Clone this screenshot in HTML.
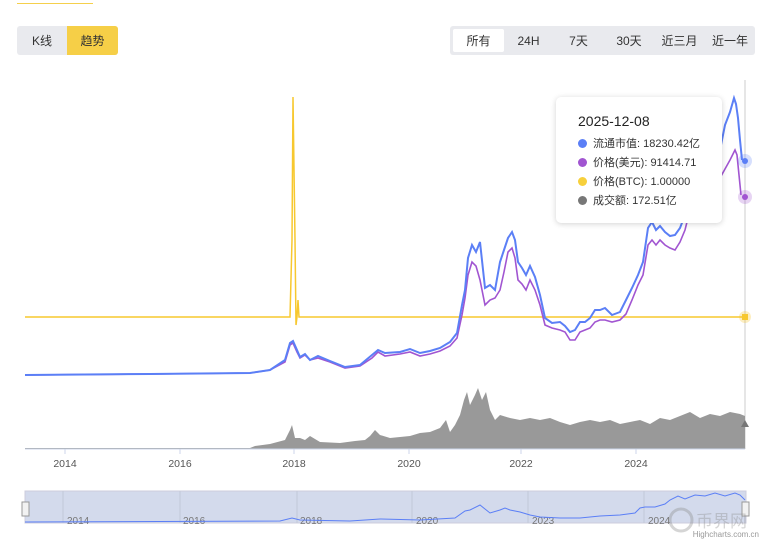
<!DOCTYPE html>
<html><head><meta charset="utf-8"><style>
body{margin:0;width:771px;height:545px;background:#fff;font-family:"Liberation Sans","Noto Sans CJK SC",sans-serif;overflow:hidden;position:relative}
.seg{position:absolute;top:26px;height:29px;background:#e9eaee;border-radius:3px;display:flex;font-size:12px;color:#333}
.seg div{display:flex;align-items:center;justify-content:center}
.tt{position:absolute;left:556px;top:97px;width:166px;height:126px;background:#fff;border-radius:5px;box-shadow:0 1px 6px rgba(0,0,0,.18);font-size:11px;color:#333}
.tt .d{position:absolute;left:22px;top:16px;font-size:14px;color:#222}
.tt .r{position:absolute;left:22px;display:flex;align-items:center}
.tt .r i{display:inline-block;width:9px;height:9px;border-radius:50%;margin-right:6px}
</style></head><body>
<div style="position:absolute;left:17px;top:3px;width:76px;height:1px;background:#f5d04c"></div>
<div class="seg" style="left:17px;width:101px"><div style="width:50px">K线</div><div style="width:51px;background:#f6cf47;border-radius:0 3px 3px 0">趋势</div></div>
<div class="seg" style="left:450px;width:305px"><div style="width:51px;background:#fff;margin:3px 0 3px 3px;border-radius:2px">所有</div><div style="width:49px">24H</div><div style="width:51px">7天</div><div style="width:50px">30天</div><div style="width:51px">近三月</div><div style="width:50px">近一年</div></div>
<svg width="771" height="545" style="position:absolute;left:0;top:0">
<line x1="745" y1="80" x2="745" y2="449" stroke="#ccc"/>
<path d="M25,448 L250,448 L255,446 L270,444 L285,440 L290,430 L292,425 L295,438 L300,438 L305,440 L310,436 L320,442 L340,443 L355,441 L365,440 L370,436 L375,430 L380,435 L390,438 L410,436 L420,433 L430,432 L440,428 L446,420 L450,432 L455,425 L460,415 L464,400 L467,392 L470,405 L475,395 L478,388 L482,400 L486,392 L490,410 L495,420 L500,415 L510,418 L520,420 L530,418 L540,420 L550,418 L560,422 L570,425 L580,422 L590,420 L600,422 L610,420 L620,424 L630,422 L640,420 L650,424 L660,418 L670,420 L680,416 L690,412 L700,418 L710,414 L720,416 L730,412 L740,414 L745,416 L745,449 L25,449Z" fill="#999"/>
<line x1="25" y1="449" x2="745" y2="449" stroke="#ccd6eb"/>
<polyline points="25,317 290,317 292,240 293,97 295,240 296,325 297,317 298,300 299,317 745,317" fill="none" stroke="#f7c82f" stroke-width="1.5"/>
<polyline points="25,375 150,374 250,373 270,370 285,362 290,345 293,343 297,352 300,358 305,355 310,360 318,358 330,362 345,368 360,366 372,358 378,352 385,356 400,354 410,352 420,356 430,354 440,351 450,346 457,338 462,315 465,298 468,275 472,262 476,266 480,280 485,305 490,300 495,298 500,290 504,272 508,252 512,248 515,258 518,280 522,284 526,290 530,280 535,290 540,305 545,325 552,328 560,330 565,332 570,340 575,340 580,332 585,330 590,328 595,322 600,320 605,320 612,322 620,320 626,314 632,300 638,285 643,275 648,245 652,240 656,245 660,240 665,245 670,248 675,250 680,242 685,230 690,210 695,200 700,190 710,182 720,178 730,160 735,150 737,155 741,195" fill="none" stroke="#a155d1" stroke-width="1.6"/>
<polyline points="25,375 150,374 250,373 270,370 285,360 290,343 293,341 297,350 300,357 305,354 310,360 318,356 330,361 345,367 360,365 372,355 378,350 385,353 400,352 410,349 420,353 430,351 440,348 450,342 457,333 462,305 465,290 468,258 472,245 476,252 480,242 485,288 490,285 495,290 500,262 504,250 508,238 512,232 515,240 518,262 522,268 526,275 530,266 535,277 540,295 545,318 552,323 560,322 565,326 570,332 575,330 580,322 585,322 590,318 595,310 600,310 605,308 612,315 620,312 626,300 632,288 638,275 643,262 648,228 652,222 656,230 660,226 665,232 670,236 675,235 680,228 685,215 690,192 695,182 700,170 710,160 720,150 725,125 730,112 734,98 736,104 738,118 740,140 742,160" fill="none" stroke="#5b7ff6" stroke-width="2"/>
<circle cx="745" cy="161" r="7" fill="#5b7ff6" opacity=".25"/><circle cx="745" cy="161" r="3" fill="#5b7ff6"/>
<circle cx="745" cy="197" r="7" fill="#a155d1" opacity=".25"/><circle cx="745" cy="197" r="3" fill="#a155d1"/>
<circle cx="745" cy="317" r="6" fill="#f7c82f" opacity=".3"/><rect x="742" y="314" width="6" height="6" fill="#f7c82f"/>
<polygon points="741,427 745,420 749,427" fill="#777"/>
<g stroke="#ccd6eb"><line x1="65" y1="449" x2="65" y2="454"/><line x1="180" y1="449" x2="180" y2="454"/><line x1="294" y1="449" x2="294" y2="454"/><line x1="409" y1="449" x2="409" y2="454"/><line x1="521" y1="449" x2="521" y2="454"/><line x1="636" y1="449" x2="636" y2="454"/></g>
<g font-size="10.5" fill="#555" text-anchor="middle" font-family="Liberation Sans"><text x="65" y="467">2014</text><text x="180" y="467">2016</text><text x="294" y="467">2018</text><text x="409" y="467">2020</text><text x="521" y="467">2022</text><text x="636" y="467">2024</text></g>
<rect x="25" y="491" width="721" height="32" fill="#d3daec" stroke="#ccd"/>
<g stroke="#c2c8d8"><line x1="63" y1="491" x2="63" y2="523"/><line x1="180" y1="491" x2="180" y2="523"/><line x1="297" y1="491" x2="297" y2="523"/><line x1="412" y1="491" x2="412" y2="523"/><line x1="528" y1="491" x2="528" y2="523"/><line x1="644" y1="491" x2="644" y2="523"/></g>
<g font-size="10" fill="#777" font-family="Liberation Sans"><text x="67" y="524">2014</text><text x="183" y="524">2016</text><text x="300" y="524">2018</text><text x="416" y="524">2020</text><text x="532" y="524">2023</text><text x="648" y="524">2024</text></g>
<polyline points="25,522 280,521 292,518 300,520 350,521 380,519 420,520 455,518 465,511 470,510 480,505 490,513 500,510 505,508 510,510 520,512 530,515 540,517 560,518 580,518 600,516 620,515 635,513 640,508 645,507 655,507 665,504 670,500 678,496 685,499 695,495 705,496 715,493 725,496 735,493 740,495 745,500" fill="none" stroke="#5b7ff6"/>
<rect x="22" y="502" width="7" height="14" fill="#f2f2f2" stroke="#999"/><rect x="742" y="502" width="7" height="14" fill="#f2f2f2" stroke="#999"/>
<g opacity=".35"><circle cx="681" cy="520" r="11" fill="none" stroke="#888" stroke-width="3"/><text x="696" y="527" font-size="17" fill="#888" font-family="Noto Sans CJK SC">币界网</text></g>
<text x="759" y="537" font-size="8" fill="#999" text-anchor="end" font-family="Liberation Sans">Highcharts.com.cn</text>
</svg>
<div class="tt"><div class="d">2025-12-08</div>
<div class="r" style="top:38px"><i style="background:#5b7ff6"></i>流通市值: 18230.42亿</div>
<div class="r" style="top:57px"><i style="background:#a155d1"></i>价格(美元): 91414.71</div>
<div class="r" style="top:76px"><i style="background:#f7d03c"></i>价格(BTC): 1.00000</div>
<div class="r" style="top:95px"><i style="background:#777"></i>成交额: 172.51亿</div></div>
</body></html>
